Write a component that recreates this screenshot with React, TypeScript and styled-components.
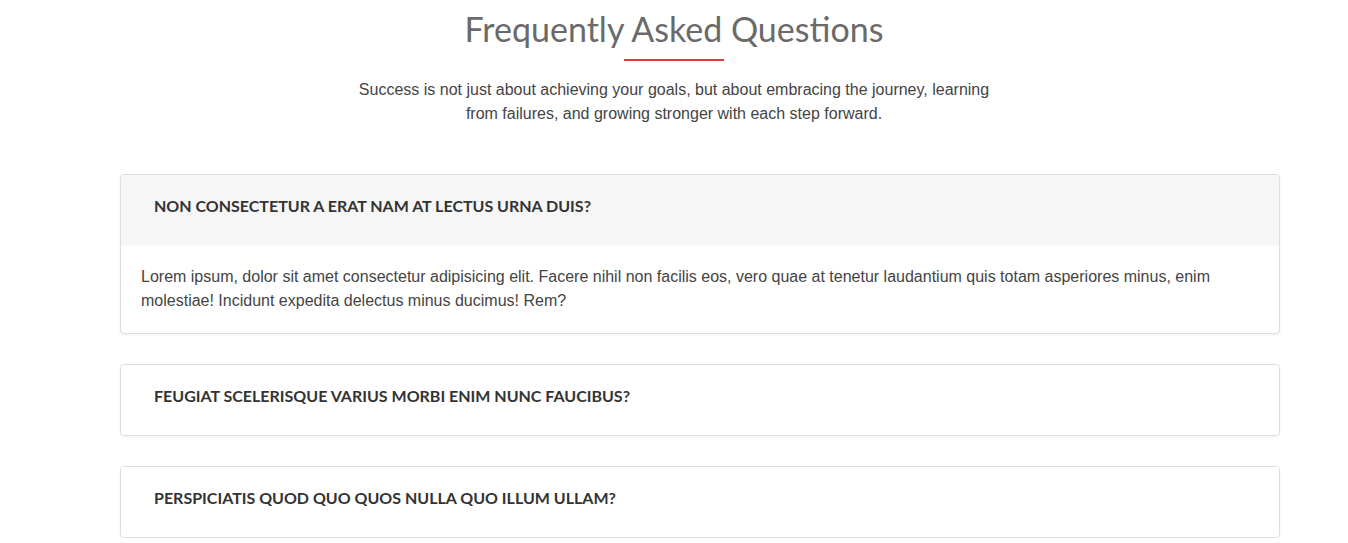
import React from "react";
import styled, { createGlobalStyle } from "styled-components";

const Global = createGlobalStyle`
  body { margin: 0; background: #fff; font-family: "Liberation Sans", Arial, sans-serif; }
`;

const Section = styled.section`
  display: flex;
  flex-direction: column;
  align-items: center;
  padding: 8px 0 0;
`;

const Title = styled.h2`
  margin: 0;
  font-family: Lato, "Open Sans", sans-serif;
  font-weight: 400;
  font-size: 34px;
  line-height: 42px;
  color: #6a6a6a;
`;

const Rule = styled.div`
  width: 100px;
  height: 2px;
  background: #e03a3a;
  margin: 9px 0 17px;
`;

const Lead = styled.p`
  margin: 0;
  max-width: 650px;
  text-align: center;
  font-size: 16px;
  line-height: 24px;
  color: #444;
`;

const List = styled.div`
  align-self: flex-start;
  width: 1160px;
  margin: 48px 0 0 120px;
  display: flex;
  flex-direction: column;
  gap: 30px;
`;

const Card = styled.div`
  border: 1px solid #dedede;
  border-radius: 4px;
  box-shadow: 0 1px 3px rgba(0, 0, 0, 0.06);
  background: #fff;
  overflow: hidden;
`;

const Head = styled.div<{ $open?: boolean }>`
  padding: 20px 33px 28px;
  background: ${(p) => (p.$open ? "#f6f6f6" : "#fff")};
  box-shadow: ${(p) => (p.$open ? "0 1px 3px rgba(0,0,0,0.04)" : "none")};
  font-family: Lato, "Open Sans", sans-serif;
  font-weight: 700;
  font-size: 16px;
  line-height: 22px;
  color: #333;
  text-transform: uppercase;
`;

const Body = styled.div`
  padding: 20px 20px 20px;
  font-size: 16px;
  line-height: 24px;
  color: #444;
`;

const faqs = [
  {
    q: "Non consectetur a erat nam at lectus urna duis?",
    a: "Lorem ipsum, dolor sit amet consectetur adipisicing elit. Facere nihil non facilis eos, vero quae at tenetur laudantium quis totam asperiores minus, enim molestiae! Incidunt expedita delectus minus ducimus! Rem?",
    open: true,
  },
  { q: "Feugiat scelerisque varius morbi enim nunc faucibus?" },
  { q: "Perspiciatis quod quo quos nulla quo illum ullam?" },
];

export default function App() {
  return (
    <>
      <Global />
      <Section>
        <Title>Frequently Asked Questions</Title>
        <Rule />
        <Lead>
          Success is not just about achieving your goals, but about embracing the journey, learning from failures, and growing stronger with each step forward.
        </Lead>
        <List>
          {faqs.map((f) => (
            <Card key={f.q}>
              <Head $open={f.open}>{f.q}</Head>
              {f.open && <Body>{f.a}</Body>}
            </Card>
          ))}
        </List>
      </Section>
    </>
  );
}
